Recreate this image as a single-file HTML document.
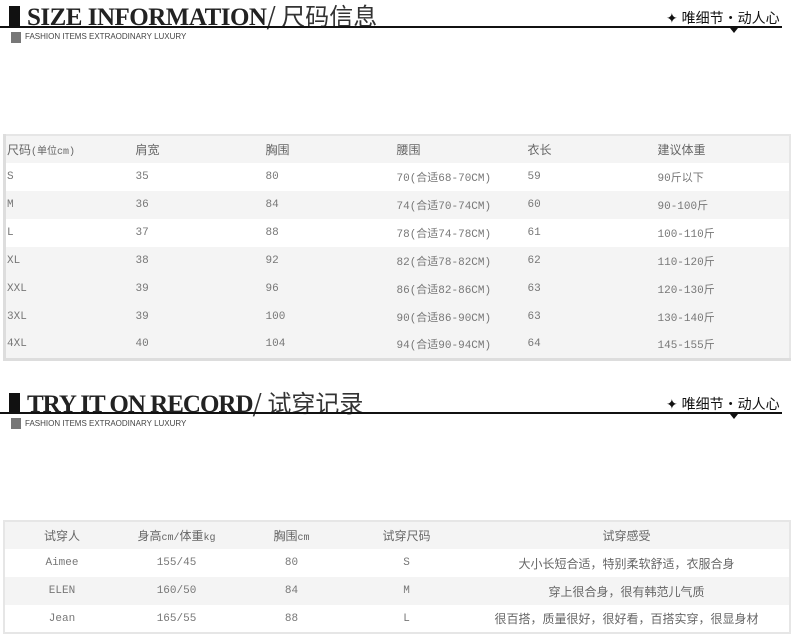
<!DOCTYPE html>
<html><head><meta charset="utf-8"><style>
*{margin:0;padding:0;box-sizing:border-box}
body{width:796px;height:637px;background:#fff;position:relative;overflow:hidden;font-family:"Liberation Mono","Noto Sans CJK SC",monospace;color:#666}
.bar{position:absolute;left:9px;width:11px;height:21px;background:#111}
.title{position:absolute;left:27px;font-family:"Liberation Serif","Noto Sans CJK SC",serif;font-weight:bold;font-size:25px;color:#222;letter-spacing:-0.5px;white-space:nowrap;line-height:26px}
.title span{font-family:"Noto Sans CJK SC",sans-serif;font-weight:normal;color:#333;font-size:24px;letter-spacing:0}
.line{position:absolute;left:0;width:782px;height:2px;background:#111}
.sq{position:absolute;left:11px;width:10px;height:11px;background:#777}
.sub{position:absolute;left:25px;font-family:"Liberation Sans",sans-serif;font-size:8px;color:#444;line-height:10px}
.rt{position:absolute;left:666px;font-family:"Liberation Sans","Noto Sans CJK SC",sans-serif;font-size:14px;color:#111;white-space:nowrap}
.tri{position:absolute;left:730px;width:0;height:0;border-left:4px solid transparent;border-right:4px solid transparent;border-top:5px solid #111}
table{position:absolute;border-collapse:collapse;border:3px solid #ddd;border-top:2px solid #e6e6e6;border-right:2px solid #e6e6e6;font-size:11px}
td{height:28px;padding:0;color:#777;white-space:nowrap}
.g td{background:#f4f4f4}
.cn{font-family:"Noto Sans CJK SC",sans-serif;font-size:12px;color:#666}
#t1 td{padding-left:1px}
#t2 td{text-align:center}
</style></head><body>
<div class="bar" style="top:6px"></div>
<div class="title" style="top:2px">SIZE INFORMATION<span>/ 尺码信息</span></div>
<div class="line" style="top:26px"></div>
<div class="sq" style="top:32px"></div>
<div class="sub" style="top:32px">FASHION ITEMS EXTRAODINARY LUXURY</div>
<div class="rt" style="top:8px">✦ 唯细节・动人心</div>
<div class="tri" style="top:28px"></div>

<table id="t1" style="left:3px;top:134px;width:788px">
<colgroup><col style="width:130px"><col style="width:130px"><col style="width:131px"><col style="width:131px"><col style="width:130px"><col></colgroup>
<tr class="g"><td class="cn">尺码<span style="font-family:'Liberation Mono','Noto Sans CJK SC';font-size:10px">(单位cm)</span></td><td class="cn">肩宽</td><td class="cn">胸围</td><td class="cn">腰围</td><td class="cn">衣长</td><td class="cn">建议体重</td></tr>
<tr><td>S</td><td>35</td><td>80</td><td>70(合适68-70CM)</td><td>59</td><td>90斤以下</td></tr>
<tr class="g"><td>M</td><td>36</td><td>84</td><td>74(合适70-74CM)</td><td>60</td><td>90-100斤</td></tr>
<tr><td>L</td><td>37</td><td>88</td><td>78(合适74-78CM)</td><td>61</td><td>100-110斤</td></tr>
<tr class="g"><td>XL</td><td>38</td><td>92</td><td>82(合适78-82CM)</td><td>62</td><td>110-120斤</td></tr>
<tr class="g"><td>XXL</td><td>39</td><td>96</td><td>86(合适82-86CM)</td><td>63</td><td>120-130斤</td></tr>
<tr class="g"><td>3XL</td><td>39</td><td>100</td><td>90(合适86-90CM)</td><td>63</td><td>130-140斤</td></tr>
<tr class="g"><td>4XL</td><td>40</td><td>104</td><td>94(合适90-94CM)</td><td>64</td><td>145-155斤</td></tr>
</table>

<div class="bar" style="top:393px"></div>
<div class="title" style="top:389px;letter-spacing:-1px">TRY IT ON RECORD<span>/ 试穿记录</span></div>
<div class="line" style="top:412px"></div>
<div class="sq" style="top:418px"></div>
<div class="sub" style="top:419px">FASHION ITEMS EXTRAODINARY LUXURY</div>
<div class="rt" style="top:394px">✦ 唯细节・动人心</div>
<div class="tri" style="top:414px"></div>

<table id="t2" style="left:3px;top:520px;width:788px;border:2px solid #e6e6e6">
<colgroup><col style="width:115px"><col style="width:115px"><col style="width:115px"><col style="width:115px"><col></colgroup>
<tr class="g"><td class="cn">试穿人</td><td class="cn">身高<span style="font-family:'Liberation Mono';font-size:10px">cm/</span>体重<span style="font-family:'Liberation Mono';font-size:10px">kg</span></td><td class="cn">胸围<span style="font-family:'Liberation Mono';font-size:10px">cm</span></td><td class="cn">试穿尺码</td><td class="cn">试穿感受</td></tr>
<tr><td>Aimee</td><td>155/45</td><td>80</td><td>S</td><td class="cn">大小长短合适，特别柔软舒适，衣服合身</td></tr>
<tr class="g"><td>ELEN</td><td>160/50</td><td>84</td><td>M</td><td class="cn">穿上很合身，很有韩范儿气质</td></tr>
<tr><td>Jean</td><td>165/55</td><td>88</td><td>L</td><td class="cn">很百搭，质量很好，很好看，百搭实穿，很显身材</td></tr>
</table>
</body></html>
